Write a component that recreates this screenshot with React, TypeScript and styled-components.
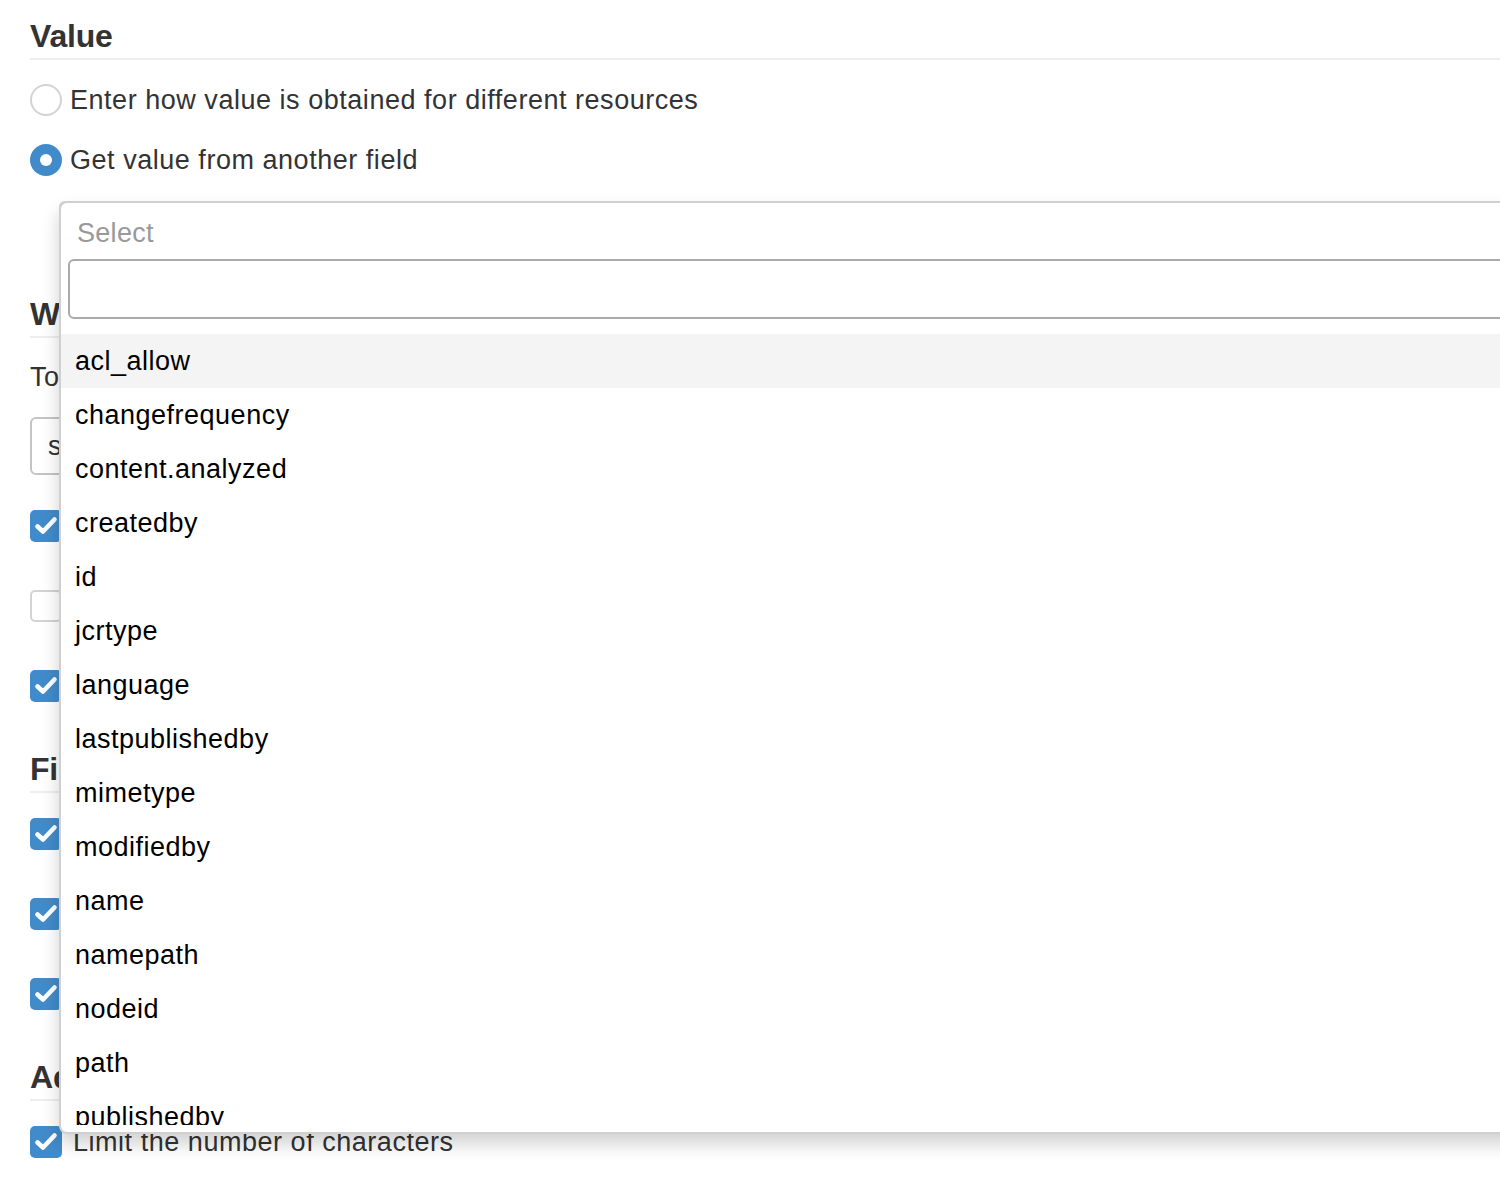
import React from "react";
import styled, { createGlobalStyle } from "styled-components";

const GlobalStyle = createGlobalStyle`
  html, body { margin: 0; padding: 0; background: #fff; }
  body {
    font-family: "Liberation Sans", Arial, Helvetica, sans-serif;
    color: #333;
    overflow: hidden;
    width: 1500px;
    height: 1182px;
  }
`;

const Page = styled.div`
  padding: 18px 0 0 30px;
  width: 1600px;
  box-sizing: border-box;
`;

const Heading = styled.h3<{ $mt?: number }>`
  margin: ${(p) => p.$mt ?? 0}px 0 0 0;
  font-size: 32px;
  line-height: 36px;
  font-weight: 700;
  color: #333;
  padding-bottom: 4px;
  border-bottom: 2px solid #eee;
  letter-spacing: -0.2px;
  white-space: nowrap;
  overflow: hidden;
`;

const RadioGroup = styled.div`
  display: flex;
  flex-direction: column;
  gap: 28px;
  margin-top: 24px;
`;

const Row = styled.label`
  display: flex;
  align-items: center;
  gap: 8px;
  height: 32px;
  font-size: 27px;
  letter-spacing: 0.53px;
  color: #333;
  white-space: nowrap;
`;

const Radio = styled.span<{ $checked?: boolean }>`
  width: 32px;
  height: 32px;
  box-sizing: border-box;
  border-radius: 50%;
  flex: none;
  display: flex;
  align-items: center;
  justify-content: center;
  border: ${(p) => (p.$checked ? "none" : "2px solid #d2d4d4")};
  background: ${(p) => (p.$checked ? "#428bca" : "#fff")};
  &::after {
    content: "";
    display: ${(p) => (p.$checked ? "block" : "none")};
    width: 12px;
    height: 12px;
    border-radius: 50%;
    background: #fff;
  }
`;

const SelectWrap = styled.div`
  position: relative;
  margin: 25px 0 0 29px;
  height: 60px;
`;

const ClosedSelect = styled.div`
  height: 60px;
  box-sizing: border-box;
  border: 2px solid #ccc;
  border-radius: 6px;
`;

const Menu = styled.div`
  position: absolute;
  left: 0;
  top: 0;
  width: 1600px;
  height: 933px;
  box-sizing: border-box;
  padding-bottom: 7px;
  background: #fff;
  border: 2px solid #d0d0d0;
  border-right: none;
  border-radius: 8px 0 0 8px;
  box-shadow: 0 10px 18px rgba(0, 0, 0, 0.18);
  z-index: 10;
  display: flex;
  flex-direction: column;
  overflow: hidden;
`;

const Placeholder = styled.div`
  height: 56px;
  padding-left: 16px;
  font-size: 27px;
  line-height: 60px;
  color: #999;
  letter-spacing: 0.3px;
  flex: none;
`;

const Search = styled.input`
  display: block;
  margin: 0 0 15px 7px;
  height: 60px;
  width: 1600px;
  box-sizing: border-box;
  border: 2px solid #aaa;
  border-radius: 6px;
  outline: none;
  flex: none;
`;

const Options = styled.ul`
  list-style: none;
  margin: 0;
  padding: 0;
  flex: 1;
  min-height: 0;
  overflow: hidden;
`;

const Option = styled.li<{ $active?: boolean }>`
  height: 54px;
  line-height: 54px;
  padding-left: 14px;
  font-size: 27px;
  letter-spacing: 0.5px;
  color: #000;
  background: ${(p) => (p.$active ? "#f4f4f4" : "transparent")};
  white-space: nowrap;
`;

const Label = styled.div`
  margin-top: 20px;
  font-size: 27px;
  letter-spacing: 0.5px;
  line-height: 38px;
  color: #333;
  white-space: nowrap;
`;

const FieldSelect = styled.div`
  margin-top: 21px;
  height: 58px;
  box-sizing: border-box;
  border: 2px solid #c4c4c4;
  border-radius: 6px;
  padding-left: 16px;
  font-size: 27px;
  line-height: 54px;
  color: #333;
`;

const CheckGroup = styled.div<{ $mt: number }>`
  display: flex;
  flex-direction: column;
  gap: 48px;
  margin-top: ${(p) => p.$mt}px;
`;

const Box = styled.span<{ $checked?: boolean }>`
  width: 32px;
  height: 32px;
  box-sizing: border-box;
  flex: none;
  border-radius: 5px;
  display: flex;
  align-items: center;
  justify-content: center;
  background: ${(p) => (p.$checked ? "#428bca" : "#fff")};
  border: ${(p) => (p.$checked ? "none" : "2px solid #d2d4d4")};
`;

const CheckText = styled.span`
  margin-left: 3px;
`;

const Check = () => (
  <svg width="32" height="32" viewBox="0 0 32 32">
    <path
      d="M7.5 16.5 L13 21.5 L24.5 9.5"
      fill="none"
      stroke="#fff"
      strokeWidth="4.6"
      strokeLinecap="round"
      strokeLinejoin="round"
    />
  </svg>
);

const CheckRow = ({ checked, children }: { checked?: boolean; children: React.ReactNode }) => (
  <Row>
    <Box $checked={checked}>{checked && <Check />}</Box>
    <CheckText>{children}</CheckText>
  </Row>
);

const options = [
  "acl_allow",
  "changefrequency",
  "content.analyzed",
  "createdby",
  "id",
  "jcrtype",
  "language",
  "lastpublishedby",
  "mimetype",
  "modifiedby",
  "name",
  "namepath",
  "nodeid",
  "path",
  "publishedby",
  "title",
];

export default function App() {
  return (
    <>
      <GlobalStyle />
      <Page>
        <Heading>Value</Heading>
        <RadioGroup>
          <Row>
            <Radio />
            Enter how value is obtained for different resources
          </Row>
          <Row>
            <Radio $checked />
            Get value from another field
          </Row>
        </RadioGroup>
        <SelectWrap>
          <ClosedSelect />
          <Menu>
            <Placeholder>Select</Placeholder>
            <Search />
            <Options>
              {options.map((o, i) => (
                <Option key={o} $active={i === 0}>
                  {o}
                </Option>
              ))}
            </Options>
          </Menu>
        </SelectWrap>

        <Heading $mt={35}>Where to search</Heading>
        <Label>Tokenizer</Label>
        <FieldSelect>standard</FieldSelect>
        <CheckGroup $mt={35}>
          <CheckRow checked>Searchable</CheckRow>
          <CheckRow>Stored</CheckRow>
          <CheckRow checked>Indexed</CheckRow>
        </CheckGroup>

        <Heading $mt={49}>Filters</Heading>
        <CheckGroup $mt={25}>
          <CheckRow checked>Lowercase</CheckRow>
          <CheckRow checked>ASCII folding</CheckRow>
          <CheckRow checked>Trim</CheckRow>
        </CheckGroup>

        <Heading $mt={49}>Advanced</Heading>
        <CheckGroup $mt={25}>
          <CheckRow checked>Limit the number of characters</CheckRow>
        </CheckGroup>
      </Page>
    </>
  );
}
